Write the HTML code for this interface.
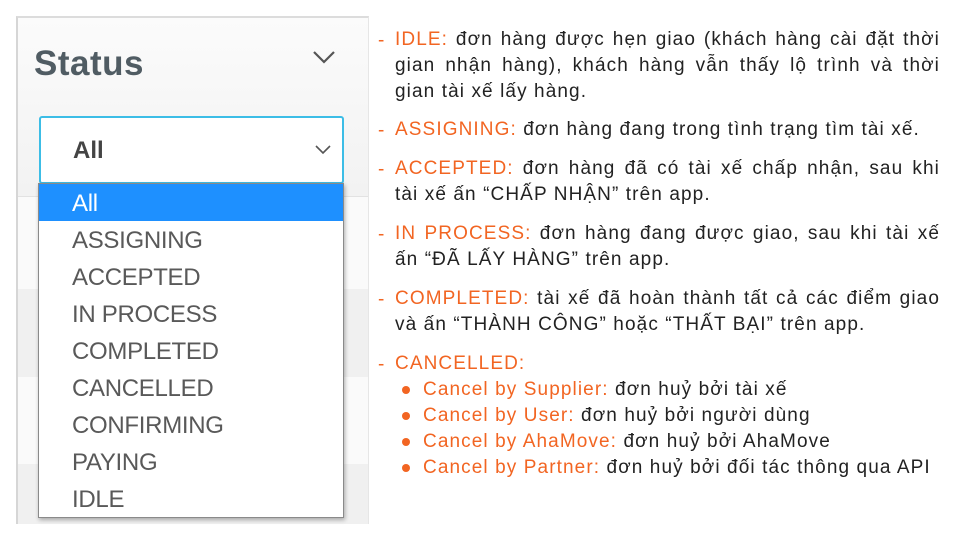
<!DOCTYPE html>
<html><head><meta charset="utf-8"><style>
body{margin:0;width:960px;height:540px;background:#fff;position:relative;overflow:hidden;font-family:"Liberation Sans","DejaVu Sans",sans-serif}
.panel{position:absolute;left:16px;top:16px;width:350px;height:506px;border-left:2px solid #d6d6d6;border-top:2px solid #dcdcdc;border-right:1px solid #e6e6e6;background:#fafafa;overflow:hidden}
.head{position:absolute;left:0;top:0;width:352px;height:178px;background:linear-gradient(#fbfbfb,#f2f2f2);border-bottom:1px solid #e2e2e2}
.row{position:absolute;left:0;width:352px;height:88px}
.status{position:absolute;left:34px;top:44px;font-size:35px;font-weight:bold;color:#505c63;letter-spacing:0.5px}
.chev{position:absolute}
.sel{position:absolute;left:39px;top:116px;width:301px;height:64px;border:2px solid #3cbde6;border-radius:3px;background:#fff}
.sel span{position:absolute;left:32px;top:19px;font-size:24px;font-weight:bold;color:#444}
.list{position:absolute;left:38px;top:183px;width:304px;height:333px;border:1px solid #8a8a8a;background:#fff;box-shadow:1px 2px 4px rgba(0,0,0,.3)}
.list div{height:37px;line-height:40px;padding-left:33px;font-size:24px;color:#595959;letter-spacing:-0.3px}
.list div.on{background:#1e90ff;color:#fff}
.t{position:absolute;font-size:19px;color:#222;line-height:26px;white-space:nowrap;letter-spacing:1.1px}
.o{color:#f26522}
.j{text-align:justify;text-align-last:justify;width:545px;white-space:normal}
.d{position:absolute;left:378px;color:#f26522;font-size:19px;line-height:26px}
.b{position:absolute;left:402px;width:8px;height:8px;border-radius:50%;background:#f26522}
</style></head><body>
<div class="panel">
<div class="head"></div>
<div class="row" style="top:271px;background:#f0f0f0"></div>
<div class="row" style="top:446px;background:#f0f0f0"></div>
</div>
<div class="status">Status</div>
<svg class="chev" style="left:312px;top:50px" width="24" height="14"><path d="M2 2 L12 12 L22 2" fill="none" stroke="#555" stroke-width="2.2"/></svg>
<div class="sel"><span>All</span><svg style="position:absolute;left:274px;top:27px" width="16" height="10"><path d="M1 1 L8 8 L15 1" fill="none" stroke="#555" stroke-width="1.6"/></svg></div>
<div class="list">
<div class="on">All</div><div>ASSIGNING</div><div>ACCEPTED</div><div>IN PROCESS</div><div>COMPLETED</div><div>CANCELLED</div><div>CONFIRMING</div><div>PAYING</div><div>IDLE</div>
</div>

<div class="d" style="top:28px">-</div>
<div class="t j" style="left:395px;top:27px"><span class="o">IDLE:</span> đơn hàng được hẹn giao (khách hàng cài đặt thời</div>
<div class="t j" style="left:395px;top:53px">gian nhận hàng), khách hàng vẫn thấy lộ trình và thời</div>
<div class="t" style="left:395px;top:79px">gian tài xế lấy hàng.</div>

<div class="d" style="top:118px">-</div>
<div class="t" style="left:395px;top:117px"><span class="o">ASSIGNING:</span> đơn hàng đang trong tình trạng tìm tài xế.</div>

<div class="d" style="top:157px">-</div>
<div class="t j" style="left:395px;top:156px"><span class="o">ACCEPTED:</span> đơn hàng đã có tài xế chấp nhận, sau khi</div>
<div class="t" style="left:395px;top:182px">tài xế ấn “CHẤP NHẬN” trên app.</div>

<div class="d" style="top:222px">-</div>
<div class="t j" style="left:395px;top:221px"><span class="o">IN PROCESS:</span> đơn hàng đang được giao, sau khi tài xế</div>
<div class="t" style="left:395px;top:247px">ấn “ĐÃ LẤY HÀNG” trên app.</div>

<div class="d" style="top:287px">-</div>
<div class="t j" style="left:395px;top:286px"><span class="o">COMPLETED:</span> tài xế đã hoàn thành tất cả các điểm giao</div>
<div class="t" style="left:395px;top:312px">và ấn “THÀNH CÔNG” hoặc “THẤT BẠI” trên app.</div>

<div class="d" style="top:352px">-</div>
<div class="t" style="left:395px;top:351px"><span class="o">CANCELLED:</span></div>

<div class="b" style="top:386px"></div>
<div class="t" style="left:423px;top:377px"><span class="o">Cancel by Supplier:</span> đơn huỷ bởi tài xế</div>
<div class="b" style="top:412px"></div>
<div class="t" style="left:423px;top:403px"><span class="o">Cancel by User:</span> đơn huỷ bởi người dùng</div>
<div class="b" style="top:438px"></div>
<div class="t" style="left:423px;top:429px"><span class="o">Cancel by AhaMove:</span> đơn huỷ bởi AhaMove</div>
<div class="b" style="top:464px"></div>
<div class="t" style="left:423px;top:455px"><span class="o">Cancel by Partner:</span> đơn huỷ bởi đối tác thông qua API</div>
</body></html>
